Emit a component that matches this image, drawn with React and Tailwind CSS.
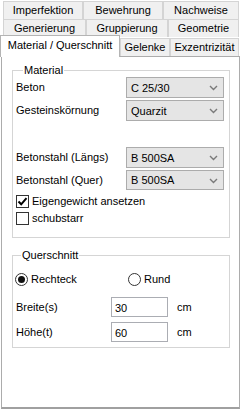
const font = { fontFamily: '"Liberation Sans", Arial, sans-serif' };

function Tab({ label, w, selected }) {
  if (selected) {
    return (
      <div className={`relative z-10 -mb-px h-[22px] ${w} flex items-center justify-center border border-b-0 border-[#b4b4b4] bg-white pb-[2px]`}>
        {label}
      </div>
    );
  }
  return (
    <div className={`h-[18px] ${w} flex items-center justify-center border border-b-0 border-[#d4d4d4] bg-[#f0f0f0]`}>
      {label}
    </div>
  );
}

function Chevron() {
  return (
    <svg width="9" height="6" viewBox="0 0 9 6" className="shrink-0">
      <path d="M1 1 L4.5 4.5 L8 1" fill="none" stroke="#7a7a7a" strokeWidth="1.4" />
    </svg>
  );
}

function Combo({ value, h = 'h-[21px]' }) {
  return (
    <div className={`${h} w-[98px] flex items-center justify-between border border-[#acacac] bg-[#e5e5e5] pl-[4px] pr-[5px] pt-[1px]`}>
      <span>{value}</span>
      <Chevron />
    </div>
  );
}

function Check({ checked, label }) {
  return (
    <div className="h-[17px] flex items-center gap-[3px]">
      <div className="w-[13px] h-[13px] border border-[#333] bg-white flex items-center justify-center">
        {checked && (
          <svg width="11" height="11" viewBox="0 0 11 11">
            <path d="M1.5 5.5 L4.2 8.3 L9.5 2.2" fill="none" stroke="#000" strokeWidth="2" />
          </svg>
        )}
      </div>
      <span>{label}</span>
    </div>
  );
}

function Radio({ checked, label }) {
  return (
    <div className="flex items-center gap-[3px]">
      <div className="w-[13px] h-[13px] rounded-full border border-[#333] bg-white flex items-center justify-center">
        {checked && <div className="w-[7px] h-[7px] rounded-full bg-[#111]" />}
      </div>
      <span>{label}</span>
    </div>
  );
}

function Field({ label, value }) {
  return (
    <div className="h-[20px] flex items-center pl-[3px]">
      <span className="w-[95px]">{label}</span>
      <div className="h-[20px] w-[57px] flex items-center border border-[#abadb3] bg-white pl-[3px] pt-[2px]">
        {value}
      </div>
      <span className="ml-[9px]">cm</span>
    </div>
  );
}

export default function App() {
  return (
    <div className="w-[241px] h-[411px] bg-white text-[11px] leading-[13px] text-black" style={font}>
      {/* Tab rows */}
      <div className="pt-[1px] pl-[3px]">
        <div className="flex">
          <Tab label="Imperfektion" w="w-[80px]" />
          <Tab label="Bewehrung" w="w-[80px]" />
          <Tab label="Nachweise" w="w-[76px]" />
        </div>
        <div className="flex">
          <Tab label="Generierung" w="w-[83px]" />
          <Tab label="Gruppierung" w="w-[82px]" />
          <Tab label="Geometrie" w="w-[71px]" />
        </div>
      </div>
      <div className="h-[19px] flex items-end">
        <Tab label="Material / Querschnitt" w="w-[120px]" selected />
        <Tab label="Gelenke" w="w-[50px]" />
        <Tab label="Exzentrizität" w="w-[69px]" />
      </div>

      {/* Panel */}
      <div className="ml-px w-[239px] h-[353px] border border-b-2 border-[#acacac] border-b-[#a0a0a0] px-[10px] pt-[7px]">
        <fieldset className="w-[218px] border border-[#d5d5d5] pl-[3px] pr-[4px] pb-[10px]">
          <legend className="ml-[7px] px-[1px]">Material</legend>
          <div className="flex items-center h-[21px]">
            <span className="w-[110px]">Beton</span>
            <Combo value="C 25/30" />
          </div>
          <div className="flex items-center h-[21px] mt-[2px]">
            <span className="w-[110px]">Gesteinskörnung</span>
            <Combo value="Quarzit" />
          </div>
          <div className="flex items-center h-[21px] mt-[26px]">
            <span className="w-[110px]">Betonstahl (Längs)</span>
            <Combo value="B 500SA" />
          </div>
          <div className="flex items-center h-[20px] mt-[2px]">
            <span className="w-[110px]">Betonstahl (Quer)</span>
            <Combo value="B 500SA" h="h-[20px]" />
          </div>
          <div className="mt-[3px]">
            <Check checked label="Eigengewicht ansetzen" />
            <Check label="schubstarr" />
          </div>
        </fieldset>

        <fieldset className="mt-[11px] w-[218px] border border-[#d5d5d5] pb-[5px]">
          <legend className="ml-[8px] px-[1px]">Querschnitt</legend>
          <div className="h-[17px] mt-[9px] flex items-center pl-[2px]">
            <div className="w-[113px]">
              <Radio checked label="Rechteck" />
            </div>
            <Radio label="Rund" />
          </div>
          <div className="mt-[9px]">
            <Field label="Breite(s)" value="30" />
          </div>
          <div className="mt-[5px]">
            <Field label="Höhe(t)" value="60" />
          </div>
        </fieldset>
      </div>
    </div>
  );
}
